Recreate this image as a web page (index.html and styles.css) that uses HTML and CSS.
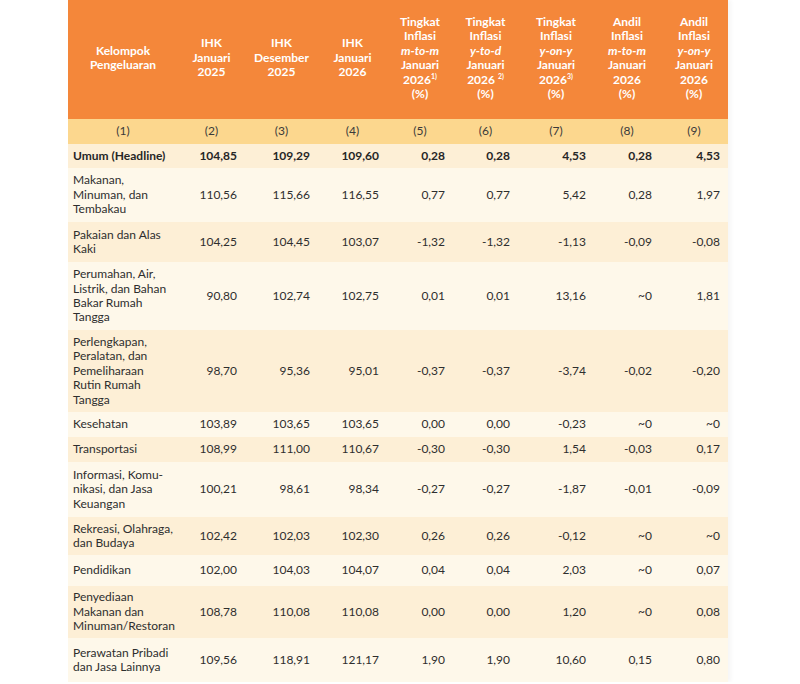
FILE: index.html
```html
<!DOCTYPE html>
<html lang="id">
<head>
<meta charset="utf-8">
<title>Tabel IHK</title>
<link rel="stylesheet" href="styles.css">
</head>
<body>
<div class="wrap">
<table class="ihk">
  <colgroup>
    <col class="c1"><col class="c2"><col class="c3"><col class="c4"><col class="c5"><col class="c6"><col class="c7"><col class="c8"><col class="c9">
  </colgroup>
  <thead>
    <tr class="head">
      <th>Kelompok<br>Pengeluaran</th>
      <th>IHK<br>Januari<br>2025</th>
      <th>IHK<br>Desember<br>2025</th>
      <th>IHK<br>Januari<br>2026</th>
      <th>Tingkat<br>Inflasi<br><i>m-to-m</i><br>Januari<br>2026<sup>1)</sup><br>(%)</th>
      <th>Tingkat<br>Inflasi<br><i>y-to-d</i><br>Januari<br>2026 <sup>2)</sup><br>(%)</th>
      <th>Tingkat<br>Inflasi<br><i>y-on-y</i><br>Januari<br>2026<sup>3)</sup><br>(%)</th>
      <th>Andil<br>Inflasi<br><i>m-to-m</i><br>Januari<br>2026<br>(%)</th>
      <th>Andil<br>Inflasi<br><i>y-on-y</i><br>Januari<br>2026<br>(%)</th>
    </tr>
    <tr class="nums">
      <th>(1)</th><th>(2)</th><th>(3)</th><th>(4)</th><th>(5)</th><th>(6)</th><th>(7)</th><th>(8)</th><th>(9)</th>
    </tr>
  </thead>
  <tbody>
    <tr class="dark total h24"><td>Umum (Headline)</td><td>104,85</td><td>109,29</td><td>109,60</td><td>0,28</td><td>0,28</td><td>4,53</td><td>0,28</td><td>4,53</td></tr>
    <tr class="light h54"><td>Makanan,<br>Minuman, dan<br>Tembakau</td><td>110,56</td><td>115,66</td><td>116,55</td><td>0,77</td><td>0,77</td><td>5,42</td><td>0,28</td><td>1,97</td></tr>
    <tr class="dark h40"><td>Pakaian dan Alas<br>Kaki</td><td>104,25</td><td>104,45</td><td>103,07</td><td>-1,32</td><td>-1,32</td><td>-1,13</td><td>-0,09</td><td>-0,08</td></tr>
    <tr class="light h68"><td>Perumahan, Air,<br>Listrik, dan Bahan<br>Bakar Rumah<br>Tangga</td><td>90,80</td><td>102,74</td><td>102,75</td><td>0,01</td><td>0,01</td><td>13,16</td><td>~0</td><td>1,81</td></tr>
    <tr class="dark h82"><td>Perlengkapan,<br>Peralatan, dan<br>Pemeliharaan<br>Rutin Rumah<br>Tangga</td><td>98,70</td><td>95,36</td><td>95,01</td><td>-0,37</td><td>-0,37</td><td>-3,74</td><td>-0,02</td><td>-0,20</td></tr>
    <tr class="light h25"><td>Kesehatan</td><td>103,89</td><td>103,65</td><td>103,65</td><td>0,00</td><td>0,00</td><td>-0,23</td><td>~0</td><td>~0</td></tr>
    <tr class="dark h25"><td>Transportasi</td><td>108,99</td><td>111,00</td><td>110,67</td><td>-0,30</td><td>-0,30</td><td>1,54</td><td>-0,03</td><td>0,17</td></tr>
    <tr class="light h55"><td>Informasi, Komu-<br>nikasi, dan Jasa<br>Keuangan</td><td>100,21</td><td>98,61</td><td>98,34</td><td>-0,27</td><td>-0,27</td><td>-1,87</td><td>-0,01</td><td>-0,09</td></tr>
    <tr class="dark h38"><td>Rekreasi, Olahraga,<br>dan Budaya</td><td>102,42</td><td>102,03</td><td>102,30</td><td>0,26</td><td>0,26</td><td>-0,12</td><td>~0</td><td>~0</td></tr>
    <tr class="light h31"><td>Pendidikan</td><td>102,00</td><td>104,03</td><td>104,07</td><td>0,04</td><td>0,04</td><td>2,03</td><td>~0</td><td>0,07</td></tr>
    <tr class="dark h52"><td>Penyediaan<br>Makanan dan<br>Minuman/Restoran</td><td>108,78</td><td>110,08</td><td>110,08</td><td>0,00</td><td>0,00</td><td>1,20</td><td>~0</td><td>0,08</td></tr>
    <tr class="light h44"><td>Perawatan Pribadi<br>dan Jasa Lainnya</td><td>109,56</td><td>118,91</td><td>121,17</td><td>1,90</td><td>1,90</td><td>10,60</td><td>0,15</td><td>0,80</td></tr>
  </tbody>
</table>
</div>
</body>
</html>
```

FILE: styles.css
```css
html, body {
  margin: 0;
  padding: 0;
  background: #ffffff;
}

body {
  font-family: Lato, "Open Sans", "Liberation Sans", sans-serif;
  color: #2e2e2e;
}

.wrap {
  padding-left: 68px;
}

.ihk {
  width: 660px;
  table-layout: fixed;
  border-collapse: collapse;
  border-spacing: 0;
  font-size: 12px;
  line-height: 14.4px;
  box-shadow: 3px 0 4px rgba(0, 0, 0, 0.04);
}

.c1 { width: 110px; }
.c2 { width: 67px; }
.c3 { width: 73px; }
.c4 { width: 69px; }
.c5 { width: 66px; }
.c6 { width: 65px; }
.c7 { width: 76px; }
.c8 { width: 66px; }
.c9 { width: 68px; }

.ihk th,
.ihk td {
  padding: 0;
  vertical-align: middle;
  white-space: nowrap;
}

.head th {
  background: #f4873a;
  color: #ffffff;
  font-weight: 700;
  text-align: center;
  height: 116px;
  padding-bottom: 3px;
  line-height: 14.5px;
}

.head th i {
  font-style: italic;
}

.head sup {
  font-size: 7px;
  line-height: 0;
  vertical-align: 5px;
}

.nums th {
  background: #fcd78e;
  color: #3a3a3a;
  font-weight: 400;
  text-align: center;
  height: 25px;
}

.ihk td {
  text-align: right;
  padding: 0 8px 0 0;
}

.ihk td:first-child {
  text-align: left;
  padding: 0 0 0 5px;
}

.h24 { height: 24px; }
.h25 { height: 25px; }
.h31 { height: 31px; }
.h38 { height: 38px; }
.h40 { height: 40px; }
.h44 { height: 44px; }
.h52 { height: 52px; }
.h54 { height: 54px; }
.h55 { height: 55px; }
.h68 { height: 68px; }
.h82 { height: 82px; }

.dark td {
  background: #fdefd6;
}

.light td {
  background: #fef8ea;
}

.total td {
  font-weight: 700;
  color: #262626;
}
```
